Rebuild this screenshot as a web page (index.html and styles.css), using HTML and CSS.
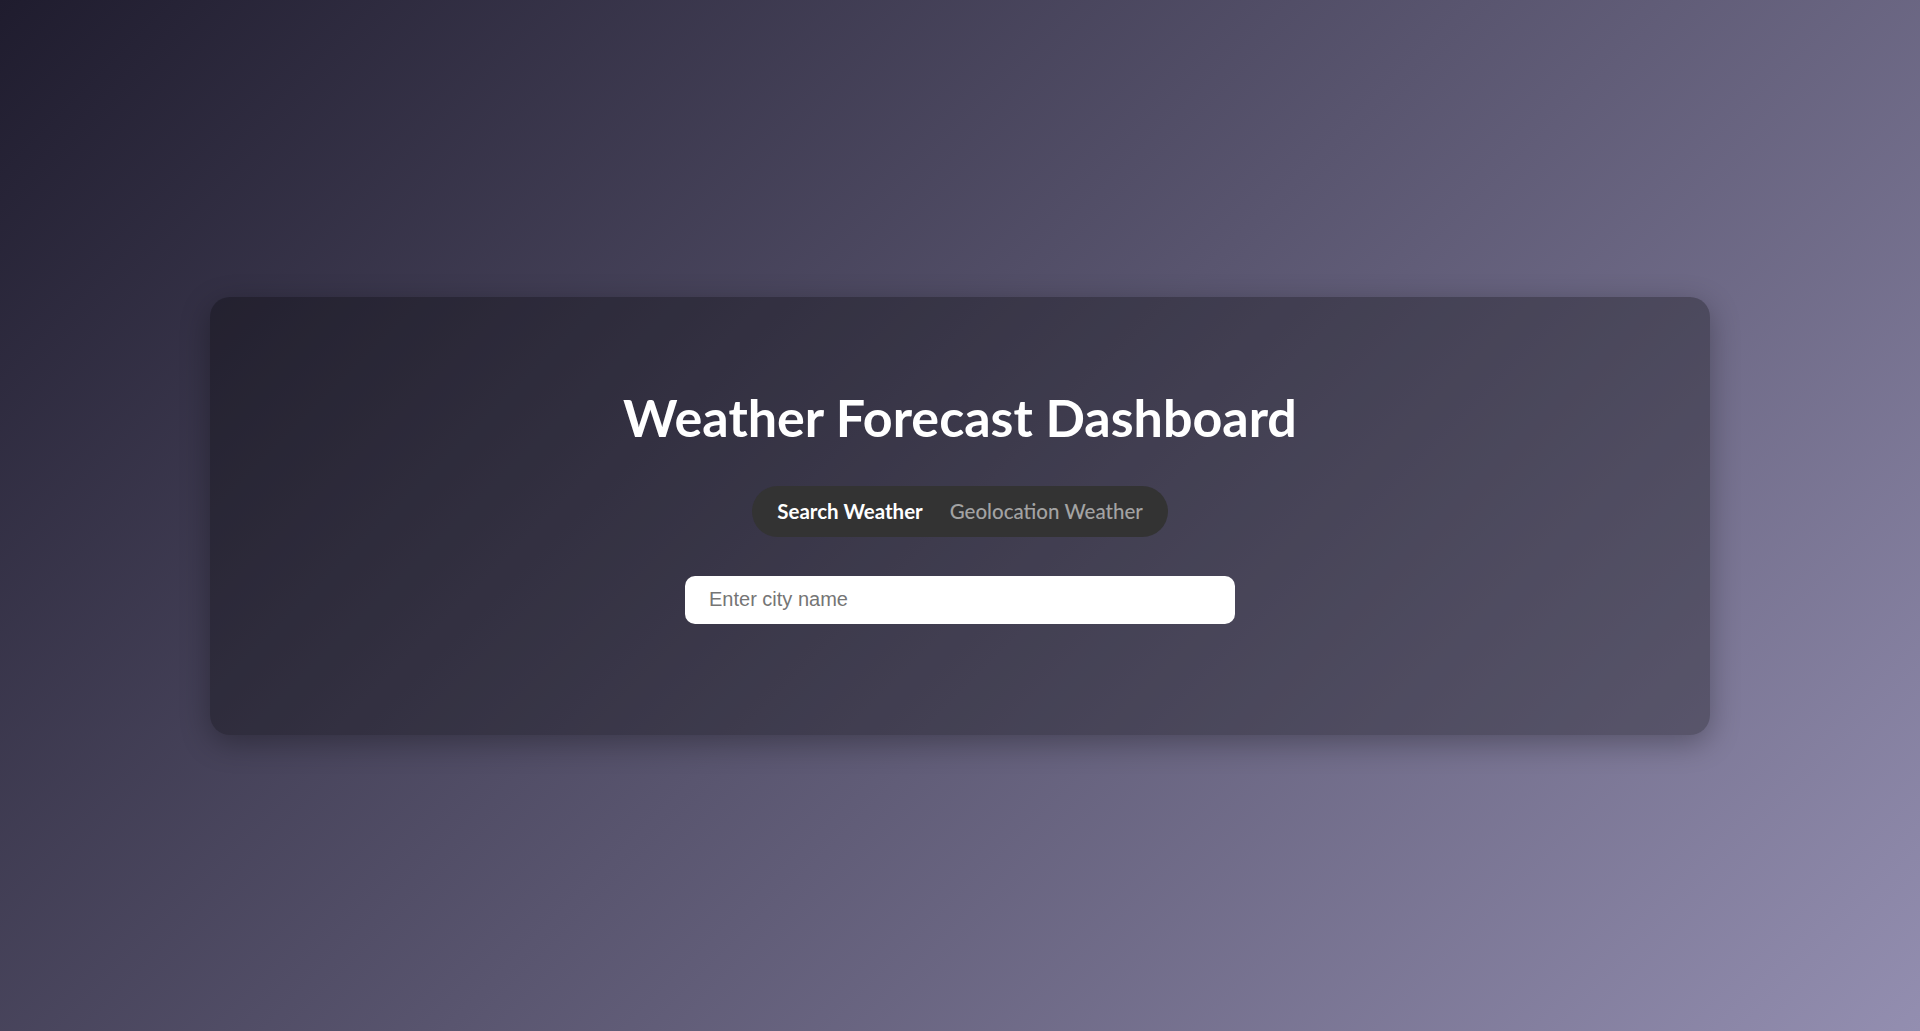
FILE: index.html
```html
<!DOCTYPE html>
<html lang="en">
<head>
<meta charset="utf-8">
<title>Weather Forecast Dashboard</title>
<link rel="stylesheet" href="styles.css">
</head>
<body>
<main class="page">
  <section class="card">
    <h1 class="title">Weather Forecast Dashboard</h1>
    <nav class="tabs">
      <span class="tab tab-active">Search Weather</span>
      <span class="tab">Geolocation Weather</span>
    </nav>
    <input class="city-input" type="text" placeholder="Enter city name">
  </section>
</main>
</body>
</html>
```
FILE: styles.css
```css
* { box-sizing: border-box; }
html, body { margin: 0; padding: 0; height: 100%; }
body {
  background: linear-gradient(135deg, #1f1c2e 0%, #938eb0 100%);
  font-family: Lato, "Open Sans", sans-serif;
  color: #fff;
}
.page {
  height: 100%;
  display: flex;
  align-items: center;
  justify-content: center;
  padding: 0 210px;
}
.card {
  width: 100%;
  height: 438px;
  background: rgba(0, 0, 0, 0.3);
  border-radius: 20px;
  box-shadow: 0 8px 30px rgba(0, 0, 0, 0.3);
  display: flex;
  flex-direction: column;
  align-items: center;
  padding-top: 92px;
}
.title {
  margin: 0;
  font-size: 52px;
  line-height: 56px;
  font-weight: 700;
}
.tabs {
  margin-top: 41px;
  height: 51px;
  border-radius: 26px;
  background: #333333;
  display: flex;
  align-items: center;
  gap: 27px;
  padding: 0 25px;
}
.tab {
  font-size: 20.5px;
  color: #a3a3a3;
  font-weight: 500;
}
.tab-active {
  color: #fff;
  font-weight: 700;
}
.city-input {
  margin-top: 39px;
  width: 550px;
  height: 48px;
  border: none;
  border-radius: 10px;
  background: #fff;
  padding: 0 24px;
  font-family: "Liberation Sans", Arial, sans-serif;
  font-size: 20px;
  outline: none;
}
.city-input::placeholder { color: #757575; }
```
